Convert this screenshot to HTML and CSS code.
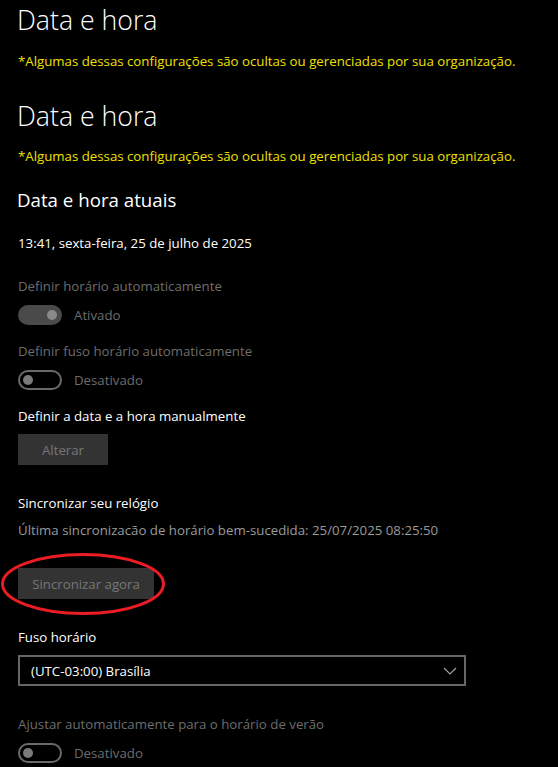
FILE: index.html
```html
<!DOCTYPE html>
<html lang="pt-BR">
<head>
    <meta charset="UTF-8">
    <meta name="viewport" content="width=device-width, initial-scale=1.0">
    <title>Data e hora</title>
    <link rel="stylesheet" href="styles.css">
</head>
<body>

    <div class="page">
        <h1>Data e hora</h1>
        <p class="notice notice-first">*Algumas dessas configurações são ocultas ou gerenciadas por sua organização.</p>

        <h1 class="second">Data e hora</h1>
        <p class="notice">*Algumas dessas configurações são ocultas ou gerenciadas por sua organização.</p>

        <h2>Data e hora atuais</h2>
        <p class="now">13:41, sexta-feira, 25 de julho de 2025</p>

        <p class="label disabled">Definir horário automaticamente</p>
        <div class="toggle-row">
            <span class="toggle on"><span class="knob"></span></span>
            <span class="toggle-text">Ativado</span>
        </div>

        <p class="label disabled">Definir fuso horário automaticamente</p>
        <div class="toggle-row">
            <span class="toggle"><span class="knob"></span></span>
            <span class="toggle-text">Desativado</span>
        </div>

        <p class="label">Definir a data e a hora manualmente</p>
        <button class="btn btn-alterar">Alterar</button>

        <p class="label section">Sincronizar seu relógio</p>
        <p class="sync-info">Última sincronizacão de horário bem-sucedida: 25/07/2025 08:25:50</p>

        <div class="btn-wrap">
            <button class="btn">Sincronizar agora</button>
            <svg class="circle-mark" width="166" height="64" viewBox="0 0 166 64">
                <ellipse cx="83" cy="32" rx="80.5" ry="29.5" fill="none" stroke="#ec1c24" stroke-width="3"/>
            </svg>
        </div>

        <p class="label section">Fuso horário</p>
        <div class="select">
            <span>(UTC-03:00) Brasília</span>
            <svg width="14" height="8" viewBox="0 0 14 8">
                <polyline points="1,1 7,7 13,1" fill="none" stroke="#a0a0a0" stroke-width="1.2"/>
            </svg>
        </div>

        <p class="label section disabled">Ajustar automaticamente para o horário de verão</p>
        <div class="toggle-row">
            <span class="toggle"><span class="knob"></span></span>
            <span class="toggle-text">Desativado</span>
        </div>
    </div>

</body>
</html>
```

FILE: styles.css
```css
body {
    margin: 0;
    background-color: #000;
    color: #fff;
    font-family: 'Segoe UI', 'Open Sans', sans-serif;
    font-size: 13.25px;
    overflow: hidden;
}

.page {
    padding: 0 18px;
}

p {
    margin: 0;
    line-height: 20px;
}

h1 {
    font-size: 26.7px;
    font-weight: 300;
    line-height: 40px;
    margin: 0 0 0 -1px;
}

h1.second {
    margin-top: 25px;
}

h2 {
    font-size: 18.7px;
    font-weight: 400;
    line-height: 28px;
    margin: 20px 0 0 -1px;
}

.notice {
    color: #f0e000;
    font-size: 13.25px;
    margin-top: 10px;
}

.notice-first {
    margin-top: 11px;
}

.now {
    margin-top: 19px;
}

.label {
    margin-top: 16px;
}

.now + .label {
    margin-top: 23px;
}

.label.section {
    margin-top: 28px;
}

.disabled {
    color: #6d6d6d;
}

.sync-info {
    color: #9a9a9a;
    margin-top: 7px;
}

.toggle-row {
    display: flex;
    align-items: center;
    gap: 12px;
    margin-top: 9px;
    height: 20px;
}

.toggle {
    width: 44px;
    height: 20px;
    box-sizing: border-box;
    border: 2px solid #6a6a6a;
    border-radius: 10px;
    display: flex;
    align-items: center;
    padding: 0 3px;
}

.knob {
    width: 10px;
    height: 10px;
    border-radius: 50%;
    background-color: #7a7a7a;
}

.toggle.on {
    background-color: #4a4a4a;
    border-color: #4a4a4a;
    justify-content: flex-end;
}

.toggle.on .knob {
    background-color: #8a8a8a;
}

.toggle-text {
    color: #6d6d6d;
}

.btn {
    display: block;
    height: 31px;
    padding: 0 8px;
    border: none;
    background-color: #333;
    color: #777;
    font-family: inherit;
    font-size: 13.25px;
    white-space: nowrap;
    margin-top: 8px;
}

.btn-alterar {
    width: 90px;
}

.btn-wrap {
    position: relative;
    width: 136px;
    margin-top: 28px;
}

.btn-wrap .btn {
    width: 136px;
    margin-top: 0;
}

.circle-mark {
    position: absolute;
    left: -18px;
    top: -16px;
}

.select {
    display: flex;
    align-items: center;
    justify-content: space-between;
    box-sizing: border-box;
    width: 448px;
    height: 31px;
    margin-top: 8px;
    padding: 0 7px 0 11px;
    border: 2px solid #666;
}
```
